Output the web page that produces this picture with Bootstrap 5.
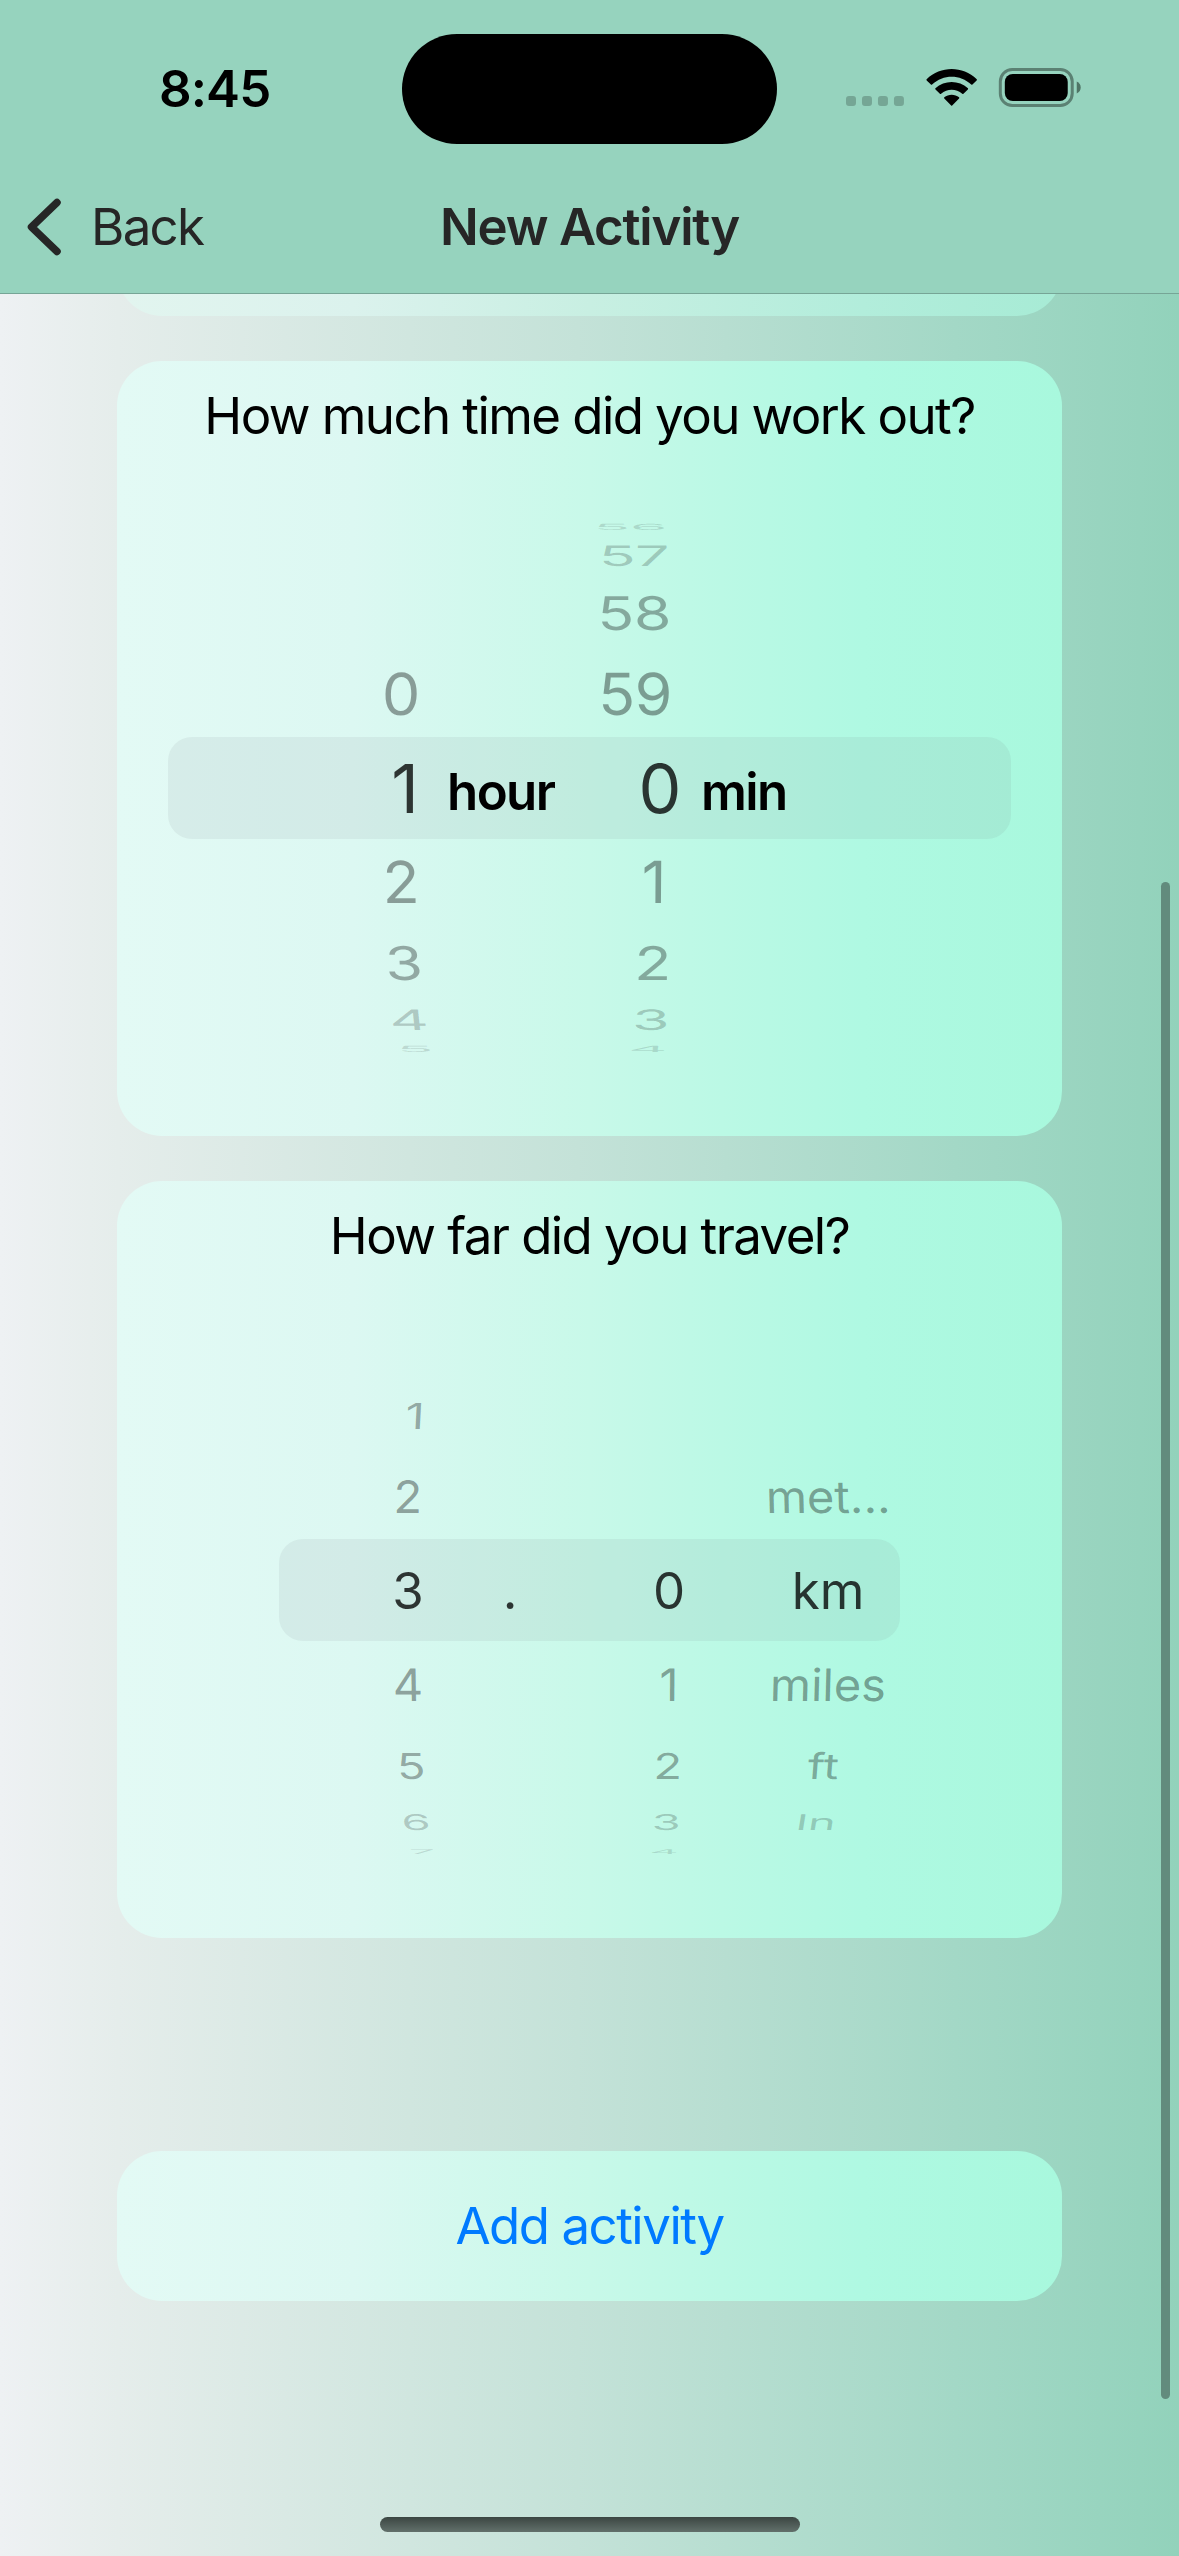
<!DOCTYPE html>
<html lang="en">
<head>
<meta charset="utf-8">
<meta name="viewport" content="width=device-width, initial-scale=1">
<title>New Activity</title>
<link href="https://cdn.jsdelivr.net/npm/bootstrap@5.3.0/dist/css/bootstrap.min.css" rel="stylesheet">
<style>
  html, body { height: 2556px; overflow: hidden; }
  body { font-family: Inter, "Liberation Sans", sans-serif; font-size: 51px; line-height: 60px; color: #000; }
  .screen { height: 2556px; background: linear-gradient(90deg, #eef1f3 0%, #e5edeb 10%, #c4e2d8 49%, #a3d8c6 81%, #92d2bb 100%); }
  .topbar { height: 294px; background: #96d3be; border-bottom: 1px solid #76a596; z-index: 2; }
  .statusrow { height: 156px; padding: 34px 97px 0 159px; }
  .clock { width: 243px; height: 41px; line-height: 41px; margin-top: 34px; font-weight: 600; letter-spacing: -.9px; }
  .island { width: 376px; height: 110px; border-radius: 55px; background: #000; }
  .signals { margin-left: 69px; margin-top: 34px; width: 236px; height: 39px; }
  .navrow { height: 137px; padding: 17px 26px 0 26px; color: #262626; }
  .back-label { margin-left: 30px; letter-spacing: -1.7px; }
  .nav-title { font-weight: 600; letter-spacing: -1.2px; }
  .feed { height: 2262px; padding: 0 117px; }
  .panel { width: 945px; border: 0; border-radius: 45px; flex: none;
    background: linear-gradient(90deg, #e3faf5 0%, #dcf8f2 25%, #c8f9e9 50%, #bbf9e5 64%, #aff9e2 79%, #a8f8dd 100%); }
  .panel-prev { height: 122px; margin-top: -100px;
    background: linear-gradient(90deg, #e2f5ef 0%, #dbf2ed 25%, #c8efe2 50%, #b2eddb 79%, #a7ebd5 100%); }
  .panel-time { height: 775px; margin-top: 45px; padding-top: 25px; }
  .panel-far { height: 757px; margin-top: 45px; padding-top: 25px; }
  .panel-add { height: 150px; margin-top: 213px; color: #007aff; letter-spacing: -1.5px; font-size: 51px; }
  .panel-add:hover { color: #007aff; }
  .ask { letter-spacing: -1.57px; white-space: nowrap; }

  /* picker wheels */
  .picker { height: 542px; }
  .picker-time { width: 843px; margin: 71px auto 0; --far: 61px; --near: 68px; }
  .picker-far { width: 621px; margin: 53px 0 0 162px; --far: 47px; --near: 51px; }
  .band { position: absolute; left: 0; right: 0; top: 220px; height: 102px; border-radius: 24px; background: rgba(110,110,120,.085); }
  .wheel { position: relative; height: 542px; }
  .wheel > span { display: flex; align-items: center; justify-content: center; white-space: nowrap; line-height: 1; font-size: var(--far);
    transform: translateX(calc(var(--k) * var(--dx, 0px))) skewX(calc(var(--k) * var(--sk, 0deg))) scaleY(var(--sy, 1)); }
  .wheel-end > span { justify-content: flex-end; }
  .wheel > .now { height: 102px; font-size: var(--near); color: rgba(0,0,0,.78); }
  .s1 { height: 86px; --sy: .95; color: rgba(0,0,0,.37); }
  .s2 { height: 76px; --sy: .76; --dx: 3px; color: rgba(0,0,0,.32); }
  .s3 { height: 38px; --sy: .46; --dx: 8px; color: rgba(0,0,0,.2); }
  .s4 { height: 20px; --sy: .14; --dx: 14px; color: rgba(0,0,0,.12); }
  .up.s1 { --sk: -1deg; } .up.s2 { --sk: -3deg; } .up.s3 { --sk: -5deg; } .up.s4 { --sk: -8deg; }
  .down.s1 { --sk: 1deg; } .down.s2 { --sk: 3deg; } .down.s3 { --sk: 6deg; } .down.s4 { --sk: 10deg; }
  .w-hour { --k: 1; width: 60px; margin-left: 203px; }
  .w-hour .now { position: relative; left: 4px; }
  .w-min { --k: -.35; width: 100px; margin-left: 20px; letter-spacing: -.5px; }
  .w-min .now { position: relative; left: 9px; }
  .w-min .down.s1 { padding-right: 6px; }
  .unit-tag { font-weight: 600; letter-spacing: -1.6px; padding-top: 7px; }
  .tag-hour { margin-left: 16px; width: 105px; }
  .tag-min { margin-left: 29px; }
  .w-whole { --k: 1; width: 60px; margin-left: 99px; }
  .w-whole .up.s2 { padding-left: 8px; }
  .w-dot { --k: 0; width: 60px; margin-left: 42px; }
  .w-tenth { --k: -.35; width: 60px; margin-left: 99px; }
  .w-unit { --k: -1.5; width: 140px; margin-left: 59px; }

  .scroll-thumb { position: absolute; left: 1161px; top: 882px; width: 9px; height: 1517px; border-radius: 5px; background: #628b7d; }
  .home-bar { position: absolute; left: 380px; top: 2517px; width: 420px; height: 15px; border-radius: 8px; background: linear-gradient(#3b4642, #62706b); }
</style>
</head>
<body>
<div class="screen position-relative overflow-hidden">
  <header class="topbar position-relative">
    <div class="statusrow d-flex align-items-start">
      <div class="clock">8:45</div>
      <div class="island"></div>
      <svg class="signals" viewBox="0 0 236 39" aria-hidden="true">
        <g fill="#75a695">
          <rect x="0" y="28" width="10" height="10" rx="3"/><rect x="16" y="28" width="10" height="10" rx="3"/>
          <rect x="32" y="28" width="10" height="10" rx="3"/><rect x="48" y="28" width="10" height="10" rx="3"/>
        </g>
        <g transform="translate(80.3 1)">
          <path d="M.4 10.2C14.500-3.400 36.500-3.400 50.600 10.200Q51 10.800 50.500 11.400L46.300 15.600Q45.700 16 45.100 15.500C34 5 17 5 5.900 15.500Q5.300 16 4.700 15.600L.5 11.400Q0 10.800 .4 10.200Z"/>
          <path d="M9.200 19.200C18.300 10.900 32.700 10.900 41.800 19.200Q42.200 19.800 41.700 20.400L37.300 24.800Q36.700 25.200 36.100 24.700C30 19.400 21 19.400 14.900 24.700Q14.300 25.200 13.700 24.800L9.300 20.400Q8.800 19.800 9.200 19.200Z"/>
          <path d="M18.100 28.300C22.200 24.900 28.800 24.900 32.900 28.300Q33.400 29 32.900 29.600L26 36.500Q25.500 37 25 36.500L18.100 29.600Q17.600 29 18.100 28.300Z"/>
        </g>
        <rect x="154.500" y="1.500" width="72" height="36" rx="12" fill="none" stroke="#5b8173" stroke-width="3"/>
        <rect x="159" y="6" width="63" height="27" rx="8"/>
        <path d="M231 13.500Q235 15.500 235 19.500T231 25.500Z" fill="#4f7465"/>
      </svg>
    </div>
    <div class="navrow row g-0 align-items-start">
      <div class="col-3 d-flex align-items-center mt-4" role="button">
        <svg width="35" height="60" viewBox="0 0 35 60" fill="none" stroke="#262626" stroke-width="7.500" stroke-linecap="round" stroke-linejoin="round"><path d="M31 5.500 5.500 30 31 54.500"/></svg>
        <span class="back-label">Back</span>
      </div>
      <div class="col-6 text-center mt-4 nav-title">New Activity</div>
    </div>
  </header>

  <main class="feed d-flex flex-column">
    <section class="panel panel-prev"></section>

    <section class="panel panel-time">
      <div class="ask text-center">How much time did you work out?</div>
      <div class="picker picker-time position-relative d-flex align-items-center">
        <div class="band"></div>
        <div class="wheel w-hour">
          <span class="s4 up"></span><span class="s3 up"></span><span class="s2 up"></span><span class="s1 up">0</span>
          <span class="now">1</span>
          <span class="s1 down">2</span><span class="s2 down">3</span><span class="s3 down">4</span><span class="s4 down">5</span>
        </div>
        <div class="unit-tag tag-hour position-relative">hour</div>
        <div class="wheel wheel-end w-min">
          <span class="s4 up">56</span><span class="s3 up">57</span><span class="s2 up">58</span><span class="s1 up">59</span>
          <span class="now">0</span>
          <span class="s1 down">1</span><span class="s2 down">2</span><span class="s3 down">3</span><span class="s4 down">4</span>
        </div>
        <div class="unit-tag tag-min position-relative">min</div>
      </div>
    </section>

    <section class="panel panel-far">
      <div class="ask text-center">How far did you travel?</div>
      <div class="picker picker-far position-relative d-flex align-items-center">
        <div class="band"></div>
        <div class="wheel w-whole">
          <span class="s4 up"></span><span class="s3 up"></span><span class="s2 up">1</span><span class="s1 up">2</span>
          <span class="now">3</span>
          <span class="s1 down">4</span><span class="s2 down">5</span><span class="s3 down">6</span><span class="s4 down">7</span>
        </div>
        <div class="wheel w-dot">
          <span class="s4 up"></span><span class="s3 up"></span><span class="s2 up"></span><span class="s1 up"></span>
          <span class="now">.</span>
        </div>
        <div class="wheel w-tenth">
          <span class="s4 up"></span><span class="s3 up"></span><span class="s2 up"></span><span class="s1 up"></span>
          <span class="now">0</span>
          <span class="s1 down">1</span><span class="s2 down">2</span><span class="s3 down">3</span><span class="s4 down">4</span>
        </div>
        <div class="wheel w-unit">
          <span class="s4 up"></span><span class="s3 up"></span><span class="s2 up"></span><span class="s1 up">met...</span>
          <span class="now">km</span>
          <span class="s1 down">miles</span><span class="s2 down">ft</span><span class="s3 down">In</span>
        </div>
      </div>
    </section>

    <button type="button" class="btn panel panel-add">Add activity</button>
  </main>

  <div class="scroll-thumb"></div>
  <div class="home-bar"></div>
</div>
<script src="https://cdn.jsdelivr.net/npm/bootstrap@5.3.0/dist/js/bootstrap.bundle.min.js"></script>
</body>
</html>
